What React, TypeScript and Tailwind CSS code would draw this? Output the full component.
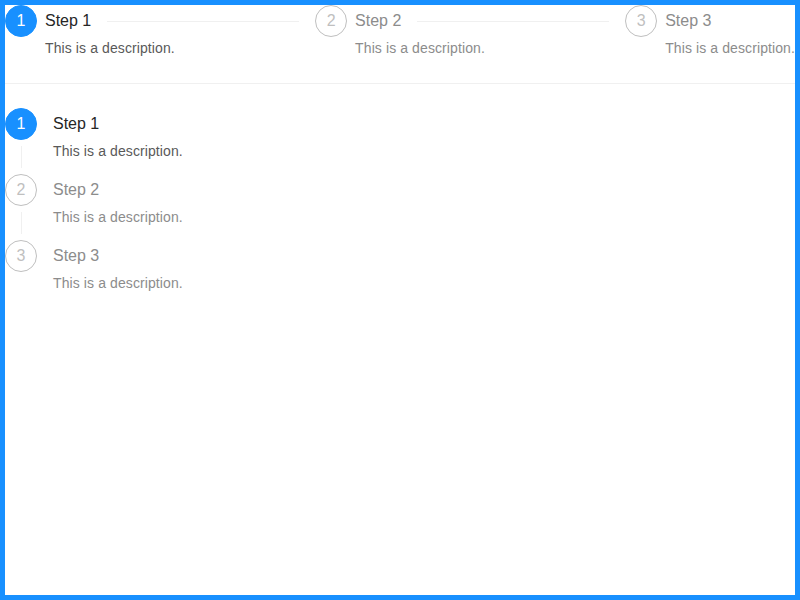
import React from 'react';

type StepStatus = 'process' | 'wait';

interface StepData {
  title: string;
  description: string;
  status: StepStatus;
}

const steps: StepData[] = [
  { title: 'Step 1', description: 'This is a description.', status: 'process' },
  { title: 'Step 2', description: 'This is a description.', status: 'wait' },
  { title: 'Step 3', description: 'This is a description.', status: 'wait' },
];

const StepIcon: React.FC<{ index: number; status: StepStatus }> = ({ index, status }) => {
  const isActive = status === 'process';
  return (
    <div
      className={`w-8 h-8 shrink-0 rounded-full flex items-center justify-center text-base leading-8 border ${
        isActive ? 'bg-[#1890ff] border-[#1890ff] text-white' : 'bg-white border-[#bfbfbf] text-[#bfbfbf]'
      }`}
    >
      {index + 1}
    </div>
  );
};

const HorizontalSteps: React.FC = () => (
  <div className="flex w-full">
    {steps.map((step, i) => {
      const isLast = i === steps.length - 1;
      const isActive = step.status === 'process';
      return (
        <div
          key={i}
          className={`flex overflow-hidden ${isLast ? 'flex-none' : 'flex-1'} ${i > 0 ? 'pl-4' : ''}`}
        >
          <StepIcon index={i} status={step.status} />
          <div className="ml-2 flex-1 min-w-0">
            <div className="flex items-center h-8">
              <span className={`text-base leading-8 whitespace-nowrap ${isActive ? 'text-[#262626]' : 'text-[#8c8c8c]'}`}>
                {step.title}
              </span>
              {!isLast && <div className="ml-4 flex-1 h-px bg-[#f0f0f0]" />}
            </div>
            <p
              className={`text-sm leading-[22px] tracking-[0.1px] whitespace-nowrap ${
                isActive ? 'text-[#595959]' : 'text-[#8c8c8c]'
              }`}
            >
              {step.description}
            </p>
          </div>
        </div>
      );
    })}
  </div>
);

const VerticalSteps: React.FC = () => (
  <div className="flex flex-col">
    {steps.map((step, i) => {
      const isLast = i === steps.length - 1;
      const isActive = step.status === 'process';
      return (
        <div key={i} className="flex">
          <div className="flex flex-col items-center w-8">
            <StepIcon index={i} status={step.status} />
            {!isLast && <div className="w-px flex-1 bg-[#f0f0f0] mt-[6px] mb-[6px]" />}
          </div>
          <div className="ml-4 pb-3 min-h-12">
            <div className={`text-base leading-8 ${isActive ? 'text-[#262626]' : 'text-[#8c8c8c]'}`}>{step.title}</div>
            <p className={`text-sm leading-[22px] tracking-[0.1px] ${isActive ? 'text-[#595959]' : 'text-[#8c8c8c]'}`}>
              {step.description}
            </p>
          </div>
        </div>
      );
    })}
  </div>
);

const App: React.FC = () => {
  return (
    <div className="w-full h-screen border-[5px] border-[#1890ff] bg-white font-['Liberation_Sans',Arial,sans-serif]">
      <HorizontalSteps />
      <div className="h-px bg-[#f0f0f0] my-6" />
      <VerticalSteps />
    </div>
  );
};

export default App;
